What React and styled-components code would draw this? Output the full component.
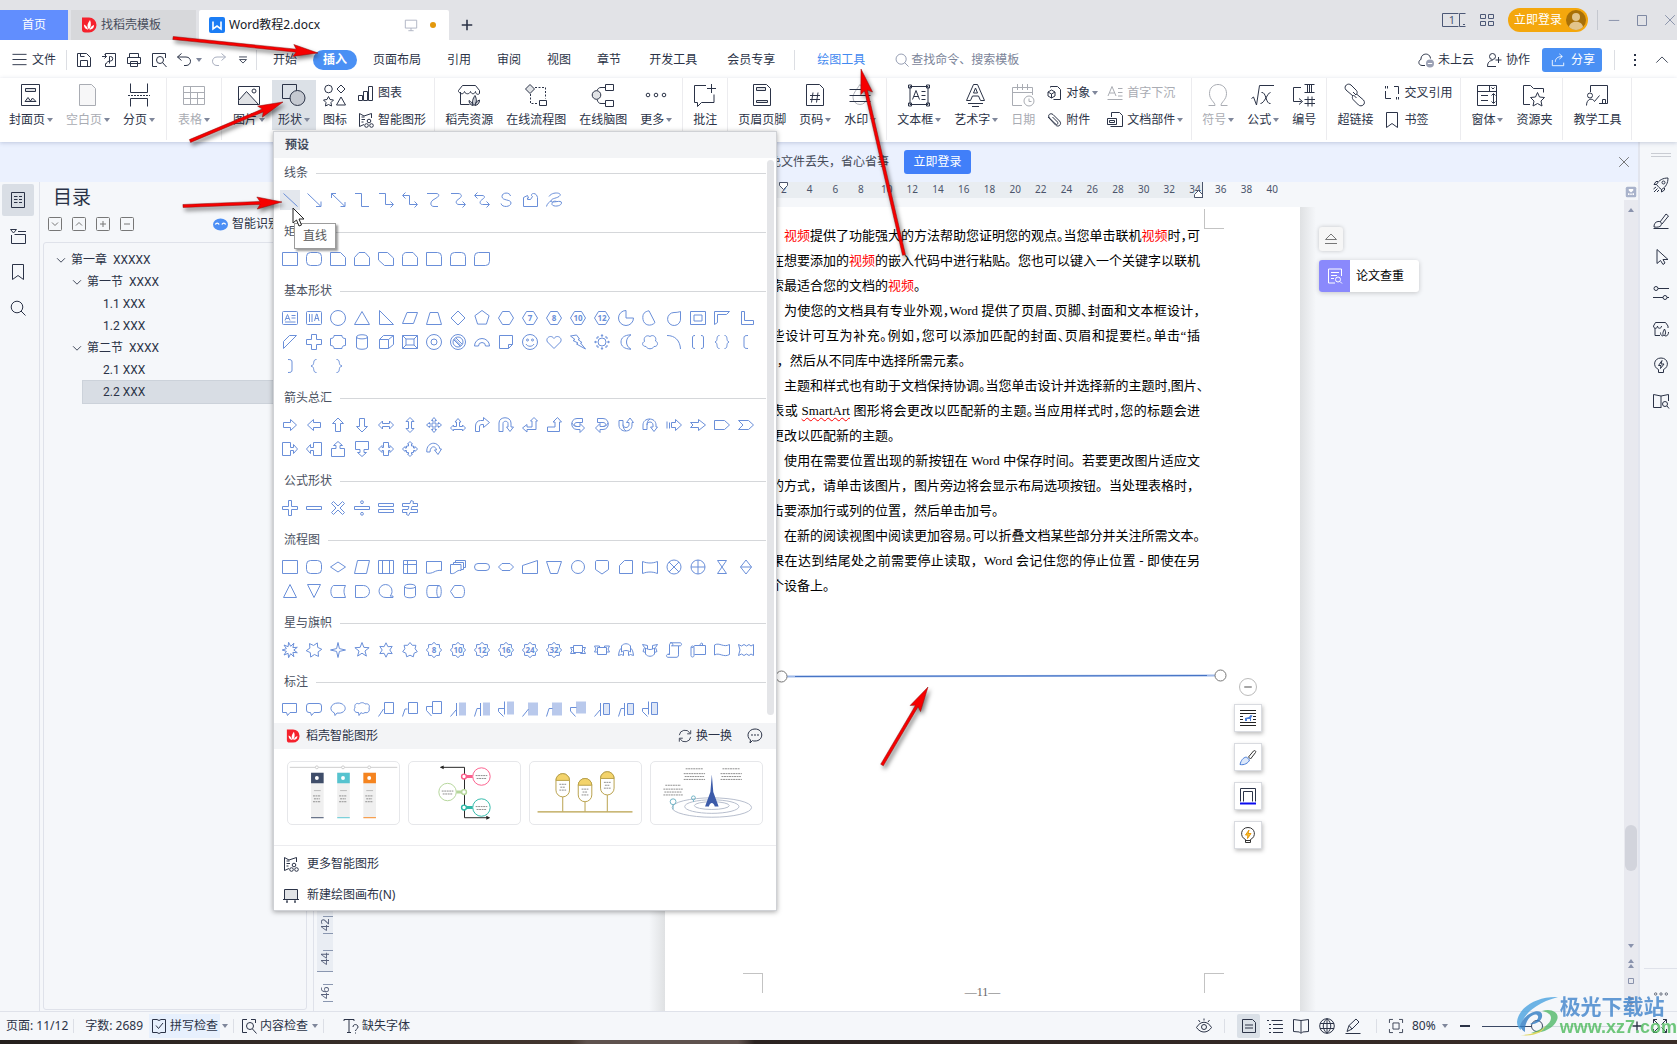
import React, { useState } from "react";
import styled, { createGlobalStyle } from "styled-components";

/* ---------- small geometry helpers ---------- */
const circ = (x, y, r) =>
  `M${x - r} ${y}a${r} ${r} 0 1 0 ${2 * r} 0a${r} ${r} 0 1 0 ${-2 * r} 0z`;
const ngon = (n, r = 7.5, rot = -90) =>
  "M" +
  Array.from({ length: n }, (_, i) => {
    const a = ((rot + (360 / n) * i) * Math.PI) / 180;
    return `${(8 + r * Math.cos(a)).toFixed(1)} ${(8 + r * Math.sin(a)).toFixed(1)}`;
  }).join("L") +
  "z";
const star = (n, R = 7.5, r = 3.5, rot = -90) =>
  "M" +
  Array.from({ length: n * 2 }, (_, i) => {
    const q = i % 2 ? r : R;
    const a = ((rot + (180 / n) * i) * Math.PI) / 180;
    return `${(8 + q * Math.cos(a)).toFixed(1)} ${(8 + q * Math.sin(a)).toFixed(1)}`;
  }).join("L") +
  "z";

const HEX = "M4.5 1.5h7l4 6.5-4 6.5h-7L.5 8z";
const RECT = "M.5 1.5h15v13h-15z";
const ROUND =
  "M4.5 1.5h7a4 4 0 014 4v5a4 4 0 01-4 4h-7a4 4 0 01-4-4v-5a4 4 0 014-4z";
const SEAL = star(8, 7.6, 6, -90);

const SECTIONS = [
  {
    name: "线条",
    items: [
      "M1.5 1.5l14 13",
      "M1.5 1.5l13 12.5M15 9.5v5h-5",
      "M1.5 1.5l13.5 13M15 10v4.5h-4.5M1.5 6V1.5H6",
      "M1 1.5h6.5v13H15",
      "M1 1.5h6.5v11H15M12.5 9.5l3 3-3 3",
      "M1 3.5h6.5v9H15M12.5 9.5l3 3-3 3M3.5.5l-3 3 3 3",
      "M1 1.5h9c4 0 3 3 1 4L7 8c-3 2-3 6.5 1 6.5h4",
      "M1 1.5h7c4 0 4 3 2 4.5L8 7.500c-3 2-2 5 1 5h6M12.5 9.5l3 3-3 3",
      "M1 3.5h7c3 0 3 2 1.5 3L7.5 8c-2 1.5-2 4.5 1 4.5H15M12.5 9.5l3 3-3 3M3.5.5l-3 3 3 3",
      "M12.5 4C12 0 4 0 4 4.5S13 7 13 11 4 16 3 11.5",
      "M1.5 5.5l4-2 1 2.500h-1v1.500h3l2-3c-2-1-1-3 1-3 2.500 0 3.500 2 4 4v9h-14z",
      "M3 4.5c3-5 13-4 11-1S5 6 5 9s11-2 10.5 2S5 15 6 11.500s4-2 5-2M5 9c-2 1-4 3-4.5 5.500",
    ],
  },
  {
    name: "矩形",
    items: [
      RECT,
      ROUND,
      "M.5 1.5h10l5 5v8h-15z",
      "M5 1.5h6l4.5 5v8h-15v-8z",
      "M.5 1.5h9l6 5.5v7.5h-9L.5 9z",
      "M5 1.5h6l4.5 5v8h-15v-9a4 4 0 014.5-4z",
      "M.5 1.5h11a4 4 0 014 4v9h-15z",
      "M4.5 1.5h7a4 4 0 014 4v9h-15v-9a4 4 0 014-4z",
      "M4.5 1.5h11v9a4 4 0 01-4 4h-11v-9a4 4 0 014-4z",
    ],
  },
  {
    name: "基本形状",
    items: [
      "M1.5 1.5h13a1 1 0 011 1v11a1 1 0 01-1 1h-13a1 1 0 01-1-1v-11a1 1 0 011-1zM3 10.5l2.5-6 2.5 6M4 8.5h3M9.5 5.5h4M9.5 8h4M3 12h10.5",
      "M1.5 1.5h13a1 1 0 011 1v11a1 1 0 01-1 1h-13a1 1 0 01-1-1v-11a1 1 0 011-1zM3.5 4v8M6 4v8M8.5 11l2-7h.5l2 7M9 8.5h3.5",
      circ(8, 8, 7.5),
      "M8 1.5l7.5 13H.5z",
      "M1.5.5v14h14z",
      "M5 2.5h10.5l-4 11H.5z",
      "M4 2.5h8l3.5 12H.5z",
      "M8 1l7 7-7 7-7-7z",
      ngon(5),
      HEX,
      { d: HEX, n: "7" },
      { d: HEX, n: "8" },
      { d: HEX, n: "10" },
      { d: HEX, n: "12" },
      "M8 .5v7.5h7.5A7.5 7.5 0 118 .5z",
      "M7 .8L13 12.5C9 17 2 15.5 1 9.5S3 1.5 7 .8z",
      "M8 2.5c3 0 5-.5 6.5-1V8A6.500 6.500 0 118 2.5z",
      "M.5 1.5h15v13h-15zM4 5h8v6H4z",
      "M.5 1.5h15l-3 3h-9v8l-3 2z",
      "M3.5 1.5h3v9h9v4h-12z",
      "M7.5 1.5h7l-13 13v-7z",
      "M5.5.5h5v5h5v5h-5v5h-5v-5h-5v-5h5z",
      "M4 1.5h8c0 2 1 3 3.5 3v7c-2.500 0-3.500 1-3.500 3H4c0-2-1-3-3.500-3v-7C3 4.500 4 3.500 4 1.500z",
      "M2.5 3c0-3 11-3 11 0v10c0 3-11 3-11 0zM2.5 3c0 2.500 11 2.500 11 0",
      "M1.5 5.5h9v9h-9zM1.5 5.5l4-4h10l-5 4M15.5 1.5v9l-5 4",
      "M.5 1.5h15v13h-15zM4 5h8v6H4zM.5 1.5L4 5M15.5 1.5L12 5M.5 14.5L4 11M15.5 14.5L12 11",
      circ(8, 8, 7.5) + circ(8, 8, 3),
      circ(8, 8, 7.5) + circ(8, 8, 5) + "M4 6l6 6M6 4l6 6M4.5 5l7 7",
      "M.5 12a7.5 7.5 0 0115 0h-4a3.5 3.5 0 00-7 0z",
      "M1.5 1.5h13v9l-4 4h-9zM14.5 10.5h-4v4",
      circ(8, 8, 7.5) + circ(5.5, 6, 1) + circ(10.5, 6, 1) + "M4 10c1.5 3 6.5 3 8 0",
      "M8 14.5L1.5 8C-1 4 5 0 8 4.5 11 0 17 4 14.500 8z",
      "M.5 2l6-1 3 4-1.5.5 4 3-1.5.5 5 6-9-5 1.500-1-5-2.500 2-1z",
      circ(8, 8, 4) +
        "M7 2l1-1.5L9 2zM7 14l1 1.5 1-1.5zM2 7L.5 8 2 9zM14 7l1.5 1L14 9zM3 5V3h2M11 3h2v2M13 11v2h-2M5 13H3v-2",
      "M13 .8C6 1 3 4 3 8s3 7 10 7.2C7 12 7 4 13 .8z",
      "M4 12.500c-4 0-4.500-4-1.500-5C1 3 5 .5 8 2.500c3-2.500 7 .5 5.500 4.500 3.500 1.500 2 6-1.500 5.500-1.500 3-6.500 3-8 0z",
      "M1 1.5c8 0 13 5 13.5 13.5",
      "M5 1.5c-2 0-2.5.5-2.5 2.5v8c0 2 .5 2.5 2.5 2.5M11 1.5c2 0 2.5.5 2.5 2.5v8c0 2-.5 2.5-2.5 2.5",
      "M5.5 1.5c-4 0-1 5.5-4.5 6.5 3.5 1 .5 6.5 4.5 6.5M10.5 1.5c4 0 1 5.5 4.5 6.5-3.5 1-.5 6.5-4.5 6.5",
      "M10 1.5c-3 0-4 .5-4 2.5v8c0 2 1 2.5 4 2.5",
      "M6 1.5c3 0 4 .5 4 2.5v8c0 2-1 2.5-4 2.5",
      "M10.5 1.5c-4.5 0-1 5.5-5.5 6.5 4.5 1 1 6.5 5.5 6.5",
      "M6.5 1.5c4.5 0 1 5.5 5.5 6.5-4.5 1-1 6.5-5.5 6.5",
    ],
  },
  {
    name: "箭头总汇",
    items: [
      "M1.5 5.5h7v-3l6 5.5-6 5.5v-3h-7z",
      "M14.5 5.5h-7v-3L1.5 8l6 5.5v-3h7z",
      "M5.5 14.5v-8h-3L8 1l5.5 5.5h-3v8z",
      "M5.5 1.5v8h-3L8 15l5.5-5.5h-3v-8z",
      "M.5 8l4-4v2.5h7V4l4 4-4 4V9.5h-7V12z",
      "M8 .5l4 4H9.5v7H12l-4 4-4-4h2.5v-7H4z",
      "M8 .5l2.5 3H9v3.5h3.5V5.5L15.5 8l-3 2.5V9H9v3.5h1.5L8 15.5l-2.5-3H7V9H3.5v1.5L.5 8l3-2.5V7H7V3.5H5.5z",
      "M8 1.5l3 3.5H9.5v4.5h3V8l3 3-3 3v-1.5h-9V14l-3-3 3-3v1.5h3V5H5z",
      "M1.5 14.5V9c0-3 2-5.5 5-5.5h3v-3l6 5-6 5v-3H8c-2 0-2.5 1-2.5 2.5v4.5z",
      "M1 14.5V6c0-7 12-7 12 0v4h2.5L12 14.5 8.5 10H10V6.5c0-3-5-3-5 0v8z",
      "M10 5V4H8.5L12 .5 15.5 4H14v8.5H5v2.5l-4.5-4L5 7.5V10h5z",
      "M9 10V5H7l4.5-4.5L15.5 5h-2v9.5h-12V10z",
      "M12.5 1.500H7c-7 0-7 11 0 11h3v3l4.500-4.500L10 6.500v3H7c-3.500 0-3.500-4 0-4h5.500zM2 6c1 2.500 3 3.500 5 3.500",
      "M3.5 1.500H9c7 0 7 11 0 11H6v3L1.500 11 6 6.500v3h3c3.500 0 3.500-4 0-4H3.500zM14 6c-1 2.500-3 3.500-5 3.500",
      "M1 3.5h4v4c0 4 6 4 6 0V5.500H8.500L12 1l3.500 4.500H14V8c0 8-13 8-13 0zM5 7.500c0 3 1 5 3 6.500",
      "M1 12.500V8C1 0 14 0 14 8v2h1.500L12 14.500 8.500 10H11V8c0-4-6-4-6 0v4.500zM5 8c0-3 1-5 3-6",
      "M1 4.5v7M3.5 5.5v6M5.5 5.5h4V2.5l6 5.5-6 5.5v-3h-4z",
      "M.5 5.5h8V2.5L15.5 8l-7 5.5v-3h-8L3 8z",
      "M.5 3.5h10l5 4.5-5 4.5H.5z",
      "M.5 3.5h10l5 4.5-5 4.5H.5L5 8z",
      "M.5 1.5h8v5h3V3.5l4 4.5-4 4.5v-3h-3v5h-8z",
      "M15.5 1.5h-8v5h-3V3.5L.5 8l4 4.5v-3h3v5h8z",
      "M1.5 15.5v-8h4.5v-3H3.5L8 .5l4.5 4H10v3h4.5v8z",
      "M1.5.5v8H6v3H3.5L8 15.5l4.5-4H10v-3h4.5v-8z",
      "M5.5 1.5h5v5h1.5V4.5L15.5 8 12 11.5V9.5h-1.5v5h-5v-5H4v2L.5 8 4 4.5v2h1.5z",
      "M8 .5L10.5 3H9.5v2h2v2H13V5.5L15.5 8 13 10.5V9.5h-1.5v2h-2V13h1L8 15.5 5.5 13h1v-1.5h-2v-2H3v1L.5 8 3 5.5V7h1.5V5h2V3h-1z",
      "M.8 11C0 1 12-1 14 8h1.5L12 13.5 8.5 9h2C9.5 4 4 5 4 11z",
    ],
  },
  {
    name: "公式形状",
    items: [
      "M6.5.5h3v6h6v3h-6v6h-3v-6h-6v-3h6z",
      "M.5 6.5h15v3H.5z",
      "M1.5 3.5l2-2L8 6l4.500-4.500 2 2L10 8l4.500 4.500-2 2L8 10l-4.500 4.500-2-2L6 8z",
      "M.5 6.5h15v3H.5z" + circ(8, 2.2, 1.4) + circ(8, 13.8, 1.4),
      "M.5 3.5h15v3H.5zM.5 9.5h15v3H.5z",
      "M.5 3.5H8L9 .5l2.5 1-.5 2h4.5v3H10l-1 3h6.5v3H8l-1.5 3-2-1 .5-2H.5v-3H6l1-3H.5z",
    ],
  },
  {
    name: "流程图",
    items: [
      RECT,
      ROUND,
      "M8 3l7.5 5L8 13 .5 8z",
      "M3.5 1.5h12l-3 13H.5z",
      "M.5 1.5h15v13h-15zM4.5 1.5v13M11.5 1.5v13",
      "M1.5 1.5h13v13h-13zM5.5 1.5v13M1.5 5.5h13",
      "M.5 2.5h15v9c-7-1-8 4-15 2.500z",
      "M5.5 1.5h10v7h-2M3.5 3.5h10v7h-2.5M.5 5.5h10.5v6c-5-1-5 4-10.5 3zM3.5 5V3.5M5.5 3.5v-2",
      "M4 4.5h8a3.5 3.5 0 010 7H4a3.5 3.5 0 010-7z",
      "M4 4.5h8L15.5 8 12 11.5H4L.5 8z",
      "M.5 6.5l15-5v13H.5z",
      "M.5 2.5h15l-4 12h-7z",
      circ(8, 8, 6.5),
      "M1.5 3c0-1 .5-1.5 1.5-1.5h10c1 0 1.5.5 1.5 1.5v7.5L8 15l-6.5-4.5z",
      "M6.5 1.5h8v13h-13v-8z",
      "M.5 2.5c5 2 10 2 15 0v12c-5-2-10-2-15 0z",
      circ(8, 8, 7) + "M3 3l10 10M13 3L3 13",
      circ(8, 8, 7) + "M8 1v14M1 8h14",
      "M3.5 1.5h9l-9 13h9z",
      "M8 1l5.5 7L8 15 2.5 8zM2.5 8h11",
      "M8 1.5l6.5 13h-13z",
      "M8 14.5l6.5-13h-13z",
      "M3.5 2.5h12c-2 4-2 7 0 12h-12c-3.500-2-3.500-10 0-12z",
      "M1.5 2.5h8a6 6 0 010 12h-8z",
      "M15 14.5H8A6.500 6.500 0 1114 8.500c0 2-1 3.500-2 4.500h3z",
      "M2.5 3.5c0-3 11-3 11 0v9c0 3-11 3-11 0zM2.5 3.5c0 2.500 11 2.500 11 0",
      "M3 2.5h10c3 0 3 12 0 12H3c-3 0-3-12 0-12zM13 2.5c-3 0-3 12 0 12",
      "M4.5 2.5h7c4 0 4 12 0 12h-7L.5 8.5z",
    ],
  },
  {
    name: "星与旗帜",
    items: [
      star(9, 7.8, 3.8, -100),
      star(6, 7.8, 4.5, -65),
      star(4, 7.5, 2, -90),
      star(5, 7.5, 3.2),
      star(6, 7.2, 3.8),
      star(7, 7.5, 5.2),
      { d: SEAL, n: "8" },
      { d: SEAL, n: "10" },
      { d: SEAL, n: "12" },
      { d: SEAL, n: "16" },
      { d: SEAL, n: "24" },
      { d: SEAL, n: "32" },
      "M3.5 3.5h9v7h-9zM3.5 5.5h-3l1.5 3-1.5 3h5v-1M12.5 5.5h3l-1.5 3 1.5 3h-5v-1",
      "M3.5 5.5h9v7h-9zM5.5 5.5v-1.5h-5l1.5 3-1.5 3h3M10.5 5.5v-1.5h5l-1.5 3 1.5 3h-3",
      "M3.5 4c2-3 7-3 9 0v6c-3-2-6-2-9 0zM3.5 6c-2 1-2.500 4-3 7.500l3-1 2 1V9.500M12.5 6c2 1 2.500 4 3 7.500l-3-1-2 1V9.500",
      "M3.5 6c3 2 6 2 9 0v6c-2 3-7 3-9 0zM5.5 7V3.500L.5 2.500l2 3-1.500 4 2.500 1M10.5 7V3.500l5-1-2 3 1.500 4-2.500 1",
      "M4 .8h10c2 0 2 3 0 3h-1.500v9c0 2-1 2.500-2.500 2.500H2c-2 0-2-3 0-3h1.500V3c0-1 .5-2.200 2-2.200s2 3 0 3h7M2 12.300h2",
      "M4.5 3.5h11v9h-11M1 5.5c0-2 3-2 3 0v8c0 2-3 2-3 0zM12.5 3.5v-2c-1-1-2.500 0-2.500 2M1 5c1 1 3 .5 3.500-1.500",
      "M.5 3c5-3 9 3 15-.5v10c-6 3.500-10-2.500-15 .5z",
      "M.5 2.500l3 1.500 2.500-1.500 2.500 1.500 2.500-1.500 2 1.500 2.500-1.500v11l-2.500-1.500-2 1.500-2.500-1.500-2.500 1.500-2.500-1.500-3 1.500L2 8z",
    ],
  },
  {
    name: "标注",
    items: [
      "M.5 2.5h14v9H8l-2.5 3-1-3h-4z",
      "M3 2.5h10a2.5 2.5 0 012.5 2.5v4a2.5 2.5 0 01-2.5 2.5H8l-2.5 3-1-3H3A2.5 2.5 0 01.5 9V5A2.5 2.5 0 013 2.5z",
      "M5 14.5l-.5-2.500C-2 9 1 2 8 2s10 7 4 9.500c-2 1-4 .5-5 .5z",
      "M5 14.5l-.5-3C0 12-.5 8 1 7 0 3 3 1.500 5 3c2-2 5-1.500 6 0 4-1 5 2 4 4 1 3-1 5.500-4 4.500-2 1.500-3 1-4 0z",
      "M6.5 1.5h9v11h-9zM5.5 8L.5 15.5",
      "M6.5 1.5h9v11h-9zM5.5 8H3L.5 15.5",
      "M6.5.5h9v12h-9zM6.5 5.5h-6v4l5 5.5",
      { d: "M6.5 2v13M6 9L.5 15.5", fill: "M9 1.5h7v13H9z" },
      { d: "M6.5 2v13M6 7.5H3L.5 15.5", fill: "M9 1.5h7v13H9z" },
      { d: "M6.5.5v13M6 7.5H.5v3l5 5", fill: "M9 .5h7v13H9z" },
      { d: "M6.5 8L.5 15.5", fill: "M6 1.5h10v13H6z" },
      { d: "M6.5 7.5H3L.5 15.5", fill: "M6 1.5h10v13H6z" },
      { d: "M6.5 6.5h-6v3.5l5 5.5", fill: "M6 .5h10v12H6z" },
      { d: "M6.5 2v13M6 9L.5 15.5M9.5 2.5h6v11h-6z", tint: "M9.5 2.5h6v11h-6z" },
      { d: "M6.5 2v13M6 7.5H3L.5 15.5M9.5 2.5h6v11h-6z", tint: "M9.5 2.5h6v11h-6z" },
      { d: "M6.5.5v13M6 7.5H.5v3l5 5M9.5 1.5h6v12h-6z", tint: "M9.5 1.5h6v12h-6z" },
    ],
  },
];

/* ---------- icons ---------- */
const GREY = "#e1e3e6";
const leaf = (
  <g fill="#fff" stroke="none">
    <path d="M8 12.5C5 9 7 6 9 3c1.5 3.5 1 7-1 9.5z" />
    <path d="M7 12.7C3.5 12 3 9.5 3 7.5c2.5 1 3.5 3 4 5.2z" />
    <path d="M8.5 12.7c1-2.5 2-3.7 4.500-4.700 0 2.500-1 4.200-4.500 4.700z" />
  </g>
);
const ICONS = {
  // 24 grid
  cover: (
    <>
      <path d="M2.5 1.5h18v21h-18z" />
      <path fill={GREY} d="M6.5 5.5h10v3h-10zM6 18.5l3-4 2.5 3.5 2-3 3.5 3.5z" />
    </>
  ),
  blank: <path fill="#f7f7f8" d="M3.5 1.5h12l4 4v17h-16z" />,
  pageBreak: (
    <>
      <path d="M3.5.5v9h17v-9M3.5 23.5v-8h17v8" />
      <path strokeDasharray="2 1" d="M1 12.5h22" />
    </>
  ),
  table: <path d="M1.5 3.5h21v18h-21zM1.5 9.5h21M1.5 15.5h21M8.5 3.5v18M15.5 9.5v12" />,
  picture: (
    <>
      <path d="M1.5 3.5h21v18h-21z" />
      <path fill={GREY} d="M1.5 17.5l8-9 12 13h-20z" />
      <path d={circ(17, 8, 2)} />
    </>
  ),
  shapes: (
    <>
      <path d="M.5 1.5h14v14h-14z" />
      <circle cx="15.5" cy="15" r="7.5" fill="#c5c9d1" />
    </>
  ),
  iconSet: (
    <path d={circ(5.5, 6, 3.8) + "M18 2l4 4-4 4-4-4zM5.5 13.5l1.5 3 3.5.5-2.5 2.5.5 3.5-3-1.5-3 1.5.5-3.5L.5 17l3.5-.5zM18 14l4.5 8h-9z"} />
  ),
  store: (
    <>
      <path d="M3.5 9v12.5h9M1.5 7.5l4-5h13l4 5v3c-2 2-4 0-4-2-1 3-4 3-5 0-1 3-5 3-6 0-1 3-4 3-6 0z" />
      <path fill="#c5c9d1" d="M17 22.5c-3-3-1-7 1-10 2 4 2 7-1 10zM16 22.5c-3-.5-4-3-4-5 2 1 4 3 4 5zM18 22.5c.5-3 2-4.5 4.5-5.5 0 3-1.5 5-4.5 5.5z" />
    </>
  ),
  flow: (
    <>
      <path fill={GREY} d="M6 1.5l4.500 4.500L6 10.500 1.500 6z" />
      <path strokeDasharray="2 1.5" d="M11 4.5h10.5v11M6.5 11v9.5h8" />
      <path d="M15.5 17.5h7v5h-7z" />
    </>
  ),
  mind: (
    <>
      <circle cx="5.5" cy="12" r="4.3" fill={GREY} />
      <path d="M14.5 1.5h8v6h-8zM14.5 17.5h8v6h-8zM6 7.5c1-2 2-3 4-3h4M6 16.5c1 3 2 4 4 4h4" />
    </>
  ),
  more: <path d={circ(4, 12, 1.8) + circ(12, 12, 1.8) + circ(20, 12, 1.8)} />,
  comment: <path d="M13 2.5H1.5v17h3v4l4-4h12.5v-8M18.5 1v9M14 5.5h9" />,
  headerFooter: (
    <>
      <path d="M3.5 1.5h13l4 4v17h-17z" />
      <path fill={GREY} d="M6.5 4.5h9v3h-9zM6.5 17.5h11v2h-11z" />
    </>
  ),
  pageNo: <path d="M3.5 1.5h13l4 4v17h-17zM10 9.5L8.5 19.5M15 9.5l-1.5 10M7 12.5h10M7 16.5h10" />,
  watermark: (
    <>
      <path stroke="#aeb1b8" d="M12 1.5c-4 6-7 9-7 13a7 7 0 0014 0c0-4-3-7-7-13z" />
      <path d="M1.5 6.5h21M1.5 12.5h21M1.5 18.5h21" />
    </>
  ),
  textBox: <path d="M3 3.5h18v18H3zM1.5 2h3v3h-3zM19.5 2h3v3h-3zM1.5 20h3v3h-3zM19.5 20h3v3h-3zM5.5 16.5L9 7.500l3.500 9M7 13.5h4.500M14.5 8.5h4M14.5 12.5h4M14.5 16.5h4" />,
  wordArt: <path d="M2.5 17.5L9.5 1.5h4l7 16h-4l-2-4.5h-6l-2 4.5zM9.5 10h4l-2-5zM4 20.5h15M8 23.5h7" />,
  date: <path d="M11 22.5H1.5v-18h20V12M1.5 9.5h20M6.5 1v6M11.5 1v6M16.5 1v6M18 13a5 5 0 100 10 5 5 0 000-10zM18 15.5v3h2.5" />,
  omega: <path d="M2.5 22.5H9C9 19 3.5 17 3.5 10.5c0-12 17-12 17 0C20.5 17 15 19 15 22.5h6.5" />,
  formula: <path d="M.5 15.5l2-1.5 3 8 3-19.5H23M10.5 9.5c5-1 4 12 9 11M19.5 9.5c-3 0-6 11-10 11" />,
  numbering: <path d="M9 4.5H1.5v14h8M7 15.5l3.5 3-3.5 3M12.5 1.5h10M12.5 9.5h10M15.5 1.5v8M17.5 1.5v8M19.5 1.5v8M16 13.5v10M20 13.5v10M12.5 16.5h10.5M12.5 20.5h10.5" />,
  link: <path d="M10 13L3 7C0 3 5-.5 8 2l5 5c2 2 1 4 0 5l-3-3M13.5 11l7 6c3 4-2 7.5-5 5l-5-5c-2-2-1-4 0-5l3 3" />,
  form: (
    <path d="M2.5 2.5h19v20h-19zM2.5 8.5h19M14.5 2.5v6M16.5 4.5l1.5 1.5 1.5-1.5M6 12.5h7M6 17.5h7M18.5 11v9M16.5 12.5l2-2 2 2M16.5 18.5l2 2 2-2" />
  ),
  folder: <path d="M8 21.5H1.5v-19h7l3 3h10v4M15.5 9.5l2 4.5 5 .5-3.5 3.5 1 5-4.5-2.5-4.5 2.5 1-5L8.5 14.5l5-.5z" />,
  teach: <path d={"M5.5 9V2.5h17v18H14" + circ(5, 12.5, 2.5) + "M1.5 22.5c0-7 6-8 8-4l5-6M17.5 20.5v-4h3v4"} />,
  // 16 grid
  chart: <path d="M.5 15.5v-5h4v5zM5.5 15.5v-9h4v9zM10.5 15.5v-14h4v14z" />,
  smart: (
    <path d={"M6 12.500l-4.500 2v-13L6 4l7.500-2.500V6M3.5 5h3M3.5 7.500h3.500M3.5 10h2" + circ(11, 9, 1.8) + circ(8.5, 13.5, 1.8) + circ(13.5, 13.5, 1.8)} />
  ),
  object: <path d="M4.5 2.5v-1h7l3 3v10h-7M5.5 5l3.5 2v4L5.5 13 2 11V7zM2 7l3.5 2L9 7M5.5 9v4" />,
  clip: <path d="M2 5l7.5 8c3 3 7-1 4-4L7 2.500C4.500.5 1 3 3.500 6l6 6c1.500 1.500 3-.5 2-2L6.500 5" />,
  dropCap: <path d="M1 11l4-9.5L9 11M2.5 8h5M11 3.5h4.5M11 7.5h4.5M.5 14.5h15M11 11h4.5" />,
  docPart: <path d="M4.5 5V.5h8l3 3v11h-12M.5 6.5h9v6h-9zM2.5 8.5h5v2h-5z" />,
  crossRef: <path d="M1.5 1v2.5M3.5 1v2.5M1.5 6v7.5H7M10 1.5h4.5V9M12.5 12v2.5M14.5 12v2.5" />,
  bookmark: <path d="M2.5.5h11v15L8 11.5l-5.5 4z" />,
  save: <path d="M1.5 1.5h9l4 4v9h-13zM4.5 14.5v-6h7v6M4.5 1.5v3h4" />,
  exportPdf: <path d="M4.5 1.5h10v13h-10v-3M4.5 1.5v3M1 4.5h4.5M3.5 2.5l2 2-2 2M8.5 11.5v-7h1a2.2 2.2 0 010 4.500c-2 0-4 1-4.500 3" />,
  print: <path d="M3.5 5.5v-4h9v4M1.5 5.5h13v6h-13zM4.5 9.5h7v5h-7z" />,
  preview: <path d={"M6 14.5H1.5v-13h13V6" + circ(9, 8, 3.5) + "M11.5 10.5l4 4.5"} />,
  undo: <path d="M5.5 1.5L1.5 5l4 3.500M1.5 5H10c6 0 6 8.500 0 8.500H8" />,
  redo: <path d="M10.5 1.5l4 3.5-4 3.5M14.5 5H6c-6 0-6 8.500 0 8.500h2" />,
  down: <path d="M3.5 4.5h9M4 7.500h8l-4 4z" />,
  burger: <path d="M.5 2.5h15M.5 8h15M.5 13.5h15" />,
  search: <path d={circ(7, 7, 5.8) + "M11 11l4.5 4.5"} />,
  cloud: (
    <>
      <path d="M7 13.5H4C-.5 13 .5 8 3 7.500 2.500 1 12 0 12.500 6.500" />
      <circle cx="12" cy="11.5" r="4" fill="#9aa0b4" stroke="none" />
      <path stroke="#fff" d="M9.8 11.5h4.4" />
    </>
  ),
  userAdd: <path d={circ(6.5, 4.5, 3) + "M10 14.5H1.5c0-4 2-6 5-6M12.5 5v6M9.5 8h6"} />,
  share: <path d="M1.5 8v6.5h13V11M5 10c0-4 3-6 7.5-6M9.5 1l3.5 3-3.5 3" />,
  outline: <path d="M1.5.5h13v15h-13zM4 4.5h3.5M4 7.5h3.5M4 10.5h3.5M9 4.5h3M9 7.5h3M9 10.5h3" />,
  section: <path d="M.5 1.5h6l-3 3.5zM8 3.5h8M1.5 7v8.5h14v-9h-11" />,
  rocket: <path d={"M6 10.5l-2.5-3C6 3 10 1 15 1c0 5-2 9-6.500 11.500zM3.5 7.5L1 7.500l2-3h2M8.5 12.500v2.500l3-2v-2M3 10l-2.5 2M4.5 11.500L1 15M6 13l-2 2" + circ(10.5, 5.5, 1.5)} />,
  brush: <path d="M.5 15.5h15M7 9l6-8 2.5 2L9 11M1 14c0-3 1-5 4-5.500s4 2 3 4c-1 1.500-4 2-7 1.500z" />,
  pointer: <path d="M4 .5v14l3.5-3 2.5 4 2-1.5-2-3.5h5z" />,
  sliders: <path d={circ(3, 3.5, 2) + "M5 3.5h11" + circ(12, 12.5, 2) + "M0 12.5h10M14 12.5h2"} />,
  storeSmall: <path d="M2 7v7.5h5M.5 5l2-3.5h10l2.5 3.5v2M.5 5c0 3 4 3 4 0 0 3 4 3 4 0M11 15c-2-2-1-4 .5-7 1.500 3 1.500 5-.5 7zM10 15c-2 0-2.500-2-2.500-3.500M12 15c3 0 3.500-2 3.500-4" />,
  bulb: <path d="M5.5 12.5C-.5 10 .5 1 8 1s8.5 9 2.500 11.500v3h-5zM9 3.500L5.500 8.500H8l-.5 3L11 7H8z" />,
  bookFind: <path d={"M8 14.5H.5v-13L8 3v12M8 3l7.5-1.5V8" + circ(12, 11, 2.5) + "M14 13l2 2.5"} />,
  checkBook: <path d="M6 1.5H1.5v13H6l2 1 2-1h4.5v-13H10l-2 1zM5 7.5l2.5 3L12 5" />,
  findBook: <path d={"M6 1.5H1.5v13H6M10 1.5h4.5V5" + circ(9, 8, 3.5) + "M11.5 11l4 4.5"} />,
  fontMissing: <path d="M1 3V1.5h10V3M6 1.5v13M4 14.5h4M10 9c0-3.500 5-3 5 0 0 2-2.500 2-2.500 4M12.5 14.5v1" />,
  eye: <path d={"M.5 9.5c4-7 11-7 15 0-4 6-11 6-15 0zM8 .5v2M2.5 2l1.5 2M13.5 2L12 4" + circ(8, 9, 2.5)} />,
  pageView: <path d="M1.5 1.5h10l3 3v10h-13zM4 7h8M4 10h8" />,
  list: <path d="M0 2.5h2M4.5 2.5h11M2 6.5h2M6 6.5h10M2 10.5h2M6 10.5h10M2 14.5h2M6 14.5h10" />,
  book: <path d="M8 15V2.500L.5 1.500v12l6 .5L8 15.500l1.500-1.500 6-.5v-12L8 2.500" />,
  globe: <path d={circ(8, 8, 7.3) + "M8 .7C3 5 3 11 8 15.300 13 11 13 5 8 .7M1 5.5h14M1 10.5h14M8 .7v14.5"} />,
  pen: <path d="M.5 15.5h15M2 13.5l2-6L11 1l3 3-7 7zM4 7.500l3 3.500" />,
  fit: <path d="M.5 4.500v-4h4M11.5.5h4v4M15.5 11.5v4h-4M4.5 15.5h-4v-4M4.5 4.5h7v7h-7z" />,
  full: <path d="M1.5 5V1.5H5M1.5 1.5l5 5M11 1.5h3.5V5M14.5 1.5l-5 5M14.5 11v3.5H11M14.5 14.5l-5-5M5 14.5H1.5V11M1.5 14.5l5-5" />,
  refresh: <path d="M1.5 7a6.5 6.5 0 0112-2.500M14.5 1.5v4h-4M14.5 9a6.5 6.5 0 01-12 2.500M1.5 14.5v-4h4" />,
  bubble: <path d={"M3 15l.5-3C-1.5 8 1.5 1 8 1c9 0 9 12 0 12-1.500 0-2 0-2.500-.5z" + circ(5, 7, 0.4) + circ(8, 7, 0.4) + circ(11, 7, 0.4)} />,
  canvas: (
    <>
      <path fill={GREY} d="M1.5 2.5h13v10h-13z" />
      <path d="M0 12.5h16M4 15.5v-3M12 15.5v-3M3 15h2M11 15h2" />
    </>
  ),
  eject: <path stroke="#777" d="M8 3L2.5 8.500h11zM2 12.5h12" />,
  paper: <path d={"M8 15H1.5V1h13v7M4 4.5h8M4 7.5h6M4 10.5h3" + circ(11, 11.5, 2.5) + "M13 13.5l2 2"} />,
  monitor: <path d="M1.5 2.5h13v9h-13zM8 11.5v3M5 14.5h6" />,
  plus: <path strokeWidth="1.8" d="M8 2v12M2 8h12" />,
  minus: <path strokeWidth="2" d="M3 8h10" />,
  close: <path d="M2.5 2.5l11 11M13.5 2.5l-11 11" />,
  square: <path d="M3.5 3.5h9v10h-9z" />,
  dash: <path d="M2 8.5h12" />,
  grid: <path d="M1.5 2.5h5v4h-5zM9.5 2.5h5v4h-5zM1.5 9.5h5v4h-5zM9.5 9.5h5v4h-5z" />,
  dots: <path strokeWidth="2" d="M8 2v2M8 7v2M8 12v2" />,
  up: <path d="M1.5 11L8 4.500l6.500 6.500" />,
  chev: <path d="M3.5 6L8 10.500 12.500 6" />,
  boxDown: <path d="M2.5 1.5h11a1 1 0 011 1v11a1 1 0 01-1 1h-11a1 1 0 01-1-1v-11a1 1 0 011-1zM5 6.5l3 3 3-3" />,
  boxUp: <path d="M2.5 1.5h11a1 1 0 011 1v11a1 1 0 01-1 1h-11a1 1 0 01-1-1v-11a1 1 0 011-1zM5 9.5l3-3 3 3" />,
  boxPlus: <path d="M2.5 1.5h11a1 1 0 011 1v11a1 1 0 01-1 1h-11a1 1 0 01-1-1v-11a1 1 0 011-1zM5 8h6M8 5v6" />,
  boxMinus: <path d="M2.5 1.5h11a1 1 0 011 1v11a1 1 0 01-1 1h-11a1 1 0 01-1-1v-11a1 1 0 011-1zM5 8h6" />,
  face: (
    <>
      <ellipse cx="8" cy="8" rx="8" ry="6.5" fill="#4c8ff5" stroke="none" />
      <path stroke="#fff" strokeWidth="1.5" d="M2.5 8c1-2 3-2 4 0M9.5 8c1-2 3-2 4 0" />
    </>
  ),
  docer: (
    <>
      <path fill="#f5222d" stroke="none" d="M1 .5h7a7.5 7.5 0 010 15H4a3 3 0 01-3-3z" />
      {leaf}
    </>
  ),
  wps: (
    <>
      <rect width="16" height="16" rx="2" fill="#1b7df5" stroke="none" />
      <path stroke="#fff" strokeWidth="1.6" d="M4 4.500v7.500l4-3 4 3V4.500" />
    </>
  ),
  wrap: (
    <>
      <path stroke="#222" d="M0 .5h16M0 3.5h16M0 6.5h3M0 9.5h3M13 6.5h3M13 9.5h3M0 12.5h16M0 15.5h16" />
      <path fill="#4c7fd8" stroke="none" d="M5 11V8l4-1 1.5-2 2 .5L11 8v3h-1V9H7v2z" />
    </>
  ),
  paint: (
    <>
      <path d="M8.5 8l5-6c1-1 3 0 2 1.500l-5 6.500z" stroke="#333" />
      <path d="M0 15.5c1-4 3-7 6.5-7.5l3 3C8.500 14 4 16.500 0 15.500z" stroke="#4c7fd8" fill="#dce8fb" />
    </>
  ),
  border: (
    <>
      <path d="M.5 13.5V.5h15v13M3.5 13.5V3.500h9v10" />
      <path stroke="#0b0bf0" strokeWidth="2" d="M0 15.5h16" />
    </>
  ),
  idea: (
    <>
      <path stroke="#333" d="M5.5 12.5C-.5 10 .5.5 8 .5s8.5 9.500 2.500 12v3h-5zM5.5 13.5h5" />
      <path fill="#ffc62b" stroke="#e59a12" d="M9 3L5.500 8H8l-.5 3.500L11 6.500H8z" />
    </>
  ),
  rulerToggle: (
    <>
      <rect x="1" y="1" width="14" height="14" rx="2" fill="#a9b3cb" stroke="none" />
      <path fill="#fff" stroke="none" d="M5 4h6v2L8 8.500 5 6zM4 12V9.500h2V12zM7 12v-2h2v2zM10 12V9.500h2V12z" />
    </>
  ),
};

const Svg = styled.svg`
  display: block;
  flex: none;
  fill: none;
  stroke: currentColor;
  overflow: visible;
`;
const Icon = ({ name, size = 16, grid = 16 }) => (
  <Svg width={size} height={size} viewBox={`0 0 ${grid} ${grid}`} aria-hidden="true">
    {ICONS[name]}
  </Svg>
);
const Caret = () => (
  <Svg width="6" height="4" viewBox="0 0 6 4" aria-hidden="true">
    <path fill="#7f879b" stroke="none" d="M0 0h6L3 4z" />
  </Svg>
);

/* ---------- ribbon data ---------- */
const MENU = ["开始", "插入", "页面布局", "引用", "审阅", "视图", "章节"];
const MENU_WIDE = ["开发工具", "会员专享"];

const RIBBON_START = [
  { label: "封面页", icon: "cover", caret: true },
  { label: "空白页", icon: "blank", caret: true, muted: true },
  { label: "分页", icon: "pageBreak", caret: true },
  "|",
  { label: "表格", icon: "table", caret: true, muted: true },
  "|",
  { label: "图片", icon: "picture", caret: true },
  { label: "形状", icon: "shapes", caret: true, menu: true },
  { label: "图标", icon: "iconSet" },
  [
    { label: "图表", icon: "chart" },
    { label: "智能图形", icon: "smart" },
  ],
];
const RIBBON_REST = [
  "|",
  { label: "稻壳资源", icon: "store" },
  { label: "在线流程图", icon: "flow" },
  { label: "在线脑图", icon: "mind" },
  { label: "更多", icon: "more", caret: true },
  "|",
  { label: "批注", icon: "comment" },
  "|",
  { label: "页眉页脚", icon: "headerFooter" },
  { label: "页码", icon: "pageNo", caret: true },
  { label: "水印", icon: "watermark", caret: true },
  "|",
  { label: "文本框", icon: "textBox", caret: true },
  { label: "艺术字", icon: "wordArt", caret: true },
  { label: "日期", icon: "date", muted: true },
  [
    { label: "对象", icon: "object", caret: true },
    { label: "附件", icon: "clip" },
  ],
  [
    { label: "首字下沉", icon: "dropCap", muted: true },
    { label: "文档部件", icon: "docPart", caret: true },
  ],
  "|",
  { label: "符号", icon: "omega", caret: true, muted: true },
  { label: "公式", icon: "formula", caret: true },
  { label: "编号", icon: "numbering" },
  "|",
  { label: "超链接", icon: "link" },
  [
    { label: "交叉引用", icon: "crossRef" },
    { label: "书签", icon: "bookmark" },
  ],
  "|",
  { label: "窗体", icon: "form", caret: true },
  { label: "资源夹", icon: "folder" },
  "|",
  { label: "教学工具", icon: "teach" },
  "|",
];

const OUTLINE = [
  { level: 0, text: "第一章  XXXXX", open: true },
  { level: 1, text: "第一节  XXXX", open: true },
  { level: 2, text: "1.1 XXX" },
  { level: 2, text: "1.2 XXX" },
  { level: 1, text: "第二节  XXXX", open: true },
  { level: 2, text: "2.1 XXX" },
  { level: 2, text: "2.2 XXX", active: true },
];

/* ---------- shapes menu ---------- */
const ShapeIcon = ({ shape }) => {
  const s = typeof shape === "string" ? { d: shape } : shape;
  return (
    <Svg width="16" height="16" viewBox="0 0 16 16" aria-hidden="true">
      {s.fill && <path d={s.fill} fill="#b9c9ec" stroke="none" />}
      {s.tint && <path d={s.tint} fill="#dde6f7" stroke="none" />}
      <path d={s.d} />
      {s.n && (
        <text x="8" y="11" textAnchor="middle" fontSize="8" fontWeight="700" fill="currentColor" stroke="none">
          {s.n}
        </text>
      )}
    </Svg>
  );
};

const textLines = (x, y, n, w = 8) =>
  Array.from({ length: n }, (_, i) => (
    <path key={i} stroke="#8d8d8d" strokeDasharray="2 .6" d={`M${x - w / 2 + (i % 2)} ${y + i * 3}h${w - (i % 2) * 2}`} />
  ));

const THUMBS = [
  <g key="a">
    <path stroke="#ccc" d="M1 5.5h111" />
    {[["#3f4d69", 29], ["#56c3cf", 56], ["#f5841f", 83]].map(([c, x]) => (
      <g key={c}>
        <path fill="#f0f0f0" stroke="none" d={`M${x - 6} 11h13v46h-13z`} />
        <path fill={c} stroke="none" d={`M${x - 6} 11h13v11h-13z`} />
        <path stroke={c} d={`M${x - 6} 57.5h13`} />
        <circle cx={x} cy="5.5" r="1.5" fill="#fff" stroke="#ccc" />
        <circle cx={x} cy="16.5" r="2" fill="#fff" stroke="none" />
        <path stroke="#bbb" d={`M${x - 3} 29.5h7`} />
        {textLines(x, 35, 3)}
      </g>
    ))}
  </g>,
  <g key="b">
    <path stroke="#222" d="M32 5.5h24.5v52H82" />
    <path fill="#222" stroke="none" d="M31 5.5l4-2v4zM83 57.5l-4-2v4z" />
    {[["#fb5f8c", 56, 15, 74], ["#b5d69b", 56, 31, 39], ["#2fb9a8", 56, 47, 74]].map(([c, x, y, cx]) => (
      <g key={c} stroke={c}>
        <path strokeWidth="3" d={`M${x} ${y}L${cx > x ? cx - 9 : cx + 9} ${y}`} />
        <circle cx={x} cy={y} r="2.5" fill="#fff" strokeWidth="1.5" />
        <circle cx={cx} cy={y} r="9" fill="#fff" />
        {textLines(cx, y - 1, 2, 12)}
      </g>
    ))}
  </g>,
  <g key="c" stroke="#b8a04a">
    <path strokeWidth="1.5" d="M7 51.5h98" />
    {[[33, 12], [56, 17], [79, 10]].map(([x, y]) => (
      <g key={x}>
        <path d={`M${x} ${y + 24}V51`} />
        <rect x={x - 7} y={y} width="14" height="24" rx="7" fill="#fff" />
        <path fill="#f3d36b" d={`M${x - 7} ${y + 7}a7 7 0 0114 0z`} />
        <g>{textLines(x, y + 11, 3, 7)}</g>
      </g>
    ))}
  </g>,
  <g key="d">
    <g stroke="#b5bccb">
      <ellipse cx="62" cy="47" rx="41" ry="10" />
      <ellipse cx="62" cy="46" rx="28" ry="7" />
      <ellipse cx="62" cy="45" rx="18" ry="4" />
    </g>
    <path fill="#3c5ba9" stroke="none" d="M62 13l1.5 18 5.5 15h-4c-1-5-5-5-6 0h-4l5.500-15z" />
    <circle cx="22" cy="41" r="3" stroke="#6fb3c4" />
    <path stroke="#6fb3c4" d="M22 44v5M43 39v2" />
    <circle cx="43" cy="37" r="2" stroke="#6fb3c4" />
    {textLines(44, 7, 1, 18)}
    {textLines(82, 7, 1, 18)}
    {textLines(44, 12, 3, 22)}
    {textLines(82, 12, 3, 22)}
    {textLines(22, 24, 1, 16)}
    {textLines(22, 28, 3, 20)}
  </g>,
];

const ShapeMenu = () => {
  const [picked, setPicked] = useState("线条-0");
  return (
    <Menu>
      <MenuTitle>预设</MenuTitle>
      <ShapeScroll>
        {SECTIONS.map((sec) => (
          <section key={sec.name}>
            <SectionTitle>{sec.name}</SectionTitle>
            <ShapeGrid>
              {sec.items.map((shape, i) => {
                const key = `${sec.name}-${i}`;
                return (
                  <ShapeButton
                    key={key}
                    aria-label={`${sec.name} ${i + 1}`}
                    $active={picked === key}
                    onClick={() => setPicked(key)}
                  >
                    <ShapeIcon shape={shape} />
                  </ShapeButton>
                );
              })}
            </ShapeGrid>
          </section>
        ))}
        <MenuScrollbar />
        <Cursor width="13" height="20" viewBox="0 0 13 20" aria-hidden="true">
          <path fill="#fff" stroke="#222" d="M1 1v15l3.500-3 2.500 6 2.500-1-2.500-6H12z" />
        </Cursor>
        <Tip role="tooltip">直线</Tip>
      </ShapeScroll>
      <SmartHead>
        <Icon name="docer" size={14} />
        <span>稻壳智能图形</span>
        <PlainButton>
          <Icon name="refresh" size={14} />
          换一换
        </PlainButton>
        <PlainButton aria-label="反馈">
          <Icon name="bubble" />
        </PlainButton>
      </SmartHead>
      <Thumbs>
        {THUMBS.map((t, i) => (
          <Thumb key={i} aria-label={`智能图形 ${i + 1}`}>
            <Svg width="111" height="62" viewBox="0 0 113 64">
              {t}
            </Svg>
          </Thumb>
        ))}
      </Thumbs>
      <MenuFoot>
        <FootButton>
          <Icon name="smart" />
          更多智能图形
        </FootButton>
        <FootButton>
          <Icon name="canvas" />
          新建绘图画布(N)
        </FootButton>
      </MenuFoot>
    </Menu>
  );
};

const Small = ({ item }) => (
  <SmallTool $muted={item.muted}>
    <Icon name={item.icon} />
    <Label>
      {item.label}
      {item.caret && <Caret />}
    </Label>
  </SmallTool>
);

const Big = ({ item }) => (
  <Tool $muted={item.muted} $open={item.menu}>
    <Icon name={item.icon} size={24} grid={24} />
    <Label>
      {item.label}
      {item.caret && <Caret />}
    </Label>
  </Tool>
);

const RibbonItem = ({ item }) => {
  if (item === "|") return <RibbonSep />;
  if (Array.isArray(item))
    return (
      <SmallColumn>
        {item.map((it) => (
          <Small key={it.label} item={it} />
        ))}
      </SmallColumn>
    );
  if (item.menu)
    return (
      <MenuAnchor>
        <Big item={item} />
        <ShapeMenu />
      </MenuAnchor>
    );
  return <Big item={item} />;
};

const Ribbon = () => (
  <RibbonBar>
    <RibbonGroup>
      {RIBBON_START.map((item, i) => (
        <RibbonItem key={i} item={item} />
      ))}
    </RibbonGroup>
    <RibbonGroup $snug>
      {RIBBON_REST.map((item, i) => (
        <RibbonItem key={i} item={item} />
      ))}
    </RibbonGroup>
  </RibbonBar>
);

/* ---------- document ---------- */
const V = () => <Hot>视频</Hot>;
const DocText = () => (
  <DocBody>
    <p>
      <Line $indent $tight>
        <V />
        提供了功能强大的方法帮助您证明您的观点。当您单击联机
        <V />
        时，可
      </Line>
      <Line>
        以在想要添加的
        <V />
        的嵌入代码中进行粘贴。您也可以键入一个关键字以联机
      </Line>
      <Line $last>
        搜索最适合您的文档的
        <V />。
      </Line>
    </p>
    <p>
      <Line $indent $tight>为使您的文档具有专业外观，Word 提供了页眉、页脚、封面和文本框设计，</Line>
      <Line $tight>这些设计可互为补充。例如，您可以添加匹配的封面、页眉和提要栏。单击“插</Line>
      <Line $last>入”，然后从不同库中选择所需元素。</Line>
    </p>
    <p>
      <Line $indent $tight>主题和样式也有助于文档保持协调。当您单击设计并选择新的主题时,图片、</Line>
      <Line $tight>
        图表或 <Typo>SmartArt</Typo> 图形将会更改以匹配新的主题。当应用样式时，您的标题会进
      </Line>
      <Line $last>行更改以匹配新的主题。</Line>
    </p>
    <p>
      <Line $indent>使用在需要位置出现的新按钮在 Word 中保存时间。若要更改图片适应文</Line>
      <Line>档的方式，请单击该图片，图片旁边将会显示布局选项按钮。当处理表格时，</Line>
      <Line $last>单击要添加行或列的位置，然后单击加号。</Line>
    </p>
    <p>
      <Line $indent $tight>在新的阅读视图中阅读更加容易。可以折叠文档某些部分并关注所需文本。</Line>
      <Line>如果在达到结尾处之前需要停止读取，Word 会记住您的停止位置 - 即使在另</Line>
      <Line $last>一个设备上。</Line>
    </p>
  </DocBody>
);

/* ---------- red arrows ---------- */
const ARROWS = [
  [173, 38, 318, 53],
  [190, 141, 283, 102],
  [183, 206, 282, 202],
  [904, 255, 861, 69],
  [882, 765, 928, 687],
];
const arrowPath = ([x1, y1, x2, y2]) => {
  const len = Math.hypot(x2 - x1, y2 - y1);
  const ux = (x2 - x1) / len;
  const uy = (y2 - y1) / len;
  const at = (back, side) =>
    `${(x2 - ux * back - uy * side).toFixed(1)} ${(y2 - uy * back + ux * side).toFixed(1)}`;
  return `M${at(len, 1.5)}L${at(22, 1.5)}L${at(25, 6)}L${at(0, 0)}L${at(25, -6)}L${at(22, -1.5)}L${at(len, -1.5)}z`;
};

const App = () => {
  const [zoom, setZoom] = useState(38);
  return (
    <Shell>
      <GlobalStyle />
      <TitleBar>
        <HomeTab>首页</HomeTab>
        <TemplateTab>
          <Icon name="docer" />
          找稻壳模板
        </TemplateTab>
        <FileTab>
          <Icon name="wps" />
          <span>Word教程2.docx</span>
          <Faint>
            <Icon name="monitor" size={14} />
          </Faint>
          <Dot />
        </FileTab>
        <AddTab aria-label="新建标签">
          <Icon name="plus" size={14} />
        </AddTab>
        <WindowTools>
          <PlainButton aria-label="单页">
            <Svg width="24" height="16" viewBox="0 0 24 16">
              <path d="M16.5 1.5H.5v13h16M23.500 1.500h-6v13h6M21 12.500h2" />
              <text x="10" y="12" fontSize="11" textAnchor="middle" fill="currentColor" stroke="none">1</text>
            </Svg>
          </PlainButton>
          <PlainButton aria-label="宫格">
            <Icon name="grid" />
          </PlainButton>
          <LoginPill>
            立即登录
            <Svg width="20" height="20" viewBox="0 0 20 20">
              <circle cx="10" cy="10" r="10" fill="#a87008" stroke="none" />
              <circle cx="10" cy="7" r="4" fill="#e2c48c" stroke="none" />
              <path d="M3 17c1-7 13-7 14 0-4 4-10 4-14 0z" fill="#e2c48c" stroke="none" />
            </Svg>
          </LoginPill>
          <WinSep />
          <WinButton aria-label="最小化"><Icon name="dash" size={14} /></WinButton>
          <WinButton aria-label="最大化"><Icon name="square" /></WinButton>
          <WinButton aria-label="关闭"><Icon name="close" size={14} /></WinButton>
        </WindowTools>
      </TitleBar>

      <MenuBar>
        <FileButton>
          <Icon name="burger" size={15} />
          文件
        </FileButton>
        <BarSep />
        <QuickTools>
          {["save", "exportPdf", "print", "preview", "undo"].map((n) => (
            <PlainButton key={n} aria-label={n}>
              <Icon name={n} />
            </PlainButton>
          ))}
          <QuickCaret><Caret /></QuickCaret>
          <Faint><Icon name="redo" /></Faint>
          <PlainButton aria-label="自定义"><Icon name="down" size={14} /></PlainButton>
        </QuickTools>
        <BarSep />
        <Tabs>
          {MENU.map((m) => (
            <MenuTab key={m} $active={m === "插入"}>{m}</MenuTab>
          ))}
          {MENU_WIDE.map((m) => (
            <MenuTab key={m} $wide>{m}</MenuTab>
          ))}
        </Tabs>
        <BarSep />
        <ToolTab>绘图工具</ToolTab>
        <SearchBox>
          <Icon name="search" size={14} />
          <input aria-label="查找命令" placeholder="查找命令、搜索模板" />
        </SearchBox>
        <MenuRight>
          <PlainButton><Icon name="cloud" />未上云</PlainButton>
          <PlainButton><Icon name="userAdd" />协作</PlainButton>
          <ShareButton><Icon name="share" size={14} />分享</ShareButton>
          <BarSep />
          <PlainButton aria-label="更多"><Icon name="dots" /></PlainButton>
          <PlainButton aria-label="收起"><Icon name="up" size={14} /></PlainButton>
        </MenuRight>
      </MenuBar>
      <Ribbon />

      <Work>
        <MainColumn>
          <Banner>
            <span>避免文件丢失，省心省事</span>
            <BannerButton>立即登录</BannerButton>
            <BannerClose aria-label="关闭提示"><Icon name="close" size={14} /></BannerClose>
          </Banner>
          <Panes>
            <NavRail>
              {["outline", "section", "bookmark", "search"].map((n, i) => (
                <RailButton key={n} $active={i === 0} aria-label={n}>
                  <Icon name={n} />
                </RailButton>
              ))}
            </NavRail>
            <OutlinePane>
              <h2>目录</h2>
              <OutlineTools>
                {["boxDown", "boxUp", "boxPlus", "boxMinus"].map((n) => (
                  <PlainButton key={n} aria-label={n}><Icon name={n} /></PlainButton>
                ))}
                <SmartButton><Icon name="face" size={15} />智能识别</SmartButton>
              </OutlineTools>
              <Tree>
                {OUTLINE.map((o) => (
                  <TreeRow key={o.text} $level={o.level} $active={o.active}>
                    {o.open && <Icon name="chev" size={14} />}
                    <span>{o.text}</span>
                  </TreeRow>
                ))}
              </Tree>
            </OutlinePane>
            <SideRuler>
              <RulerFill>
                <SideMark $both>42</SideMark>
                <SideMark>44</SideMark>
              </RulerFill>
              <RulerTail>
                <SideMark $both>46</SideMark>
              </RulerTail>
            </SideRuler>
            <DocArea>
              <RulerRow>
                <Ruler>
                  {Array.from({ length: 20 }, (_, i) => (
                    <span key={i}>{(i + 1) * 2}</span>
                  ))}
                  <IndentMarks width="640" height="18" viewBox="0 0 640 18" aria-hidden="true">
                    <path fill="#fff" d="M114.5.5h8v3l-4 4-4-4zM529.5 15.5v-3l4-4 4 4v3z" />
                    <path d="M537.5 0v16" />
                  </IndentMarks>
                </Ruler>
              </RulerRow>
              <Canvas>
                <Page>
                  <DocText />
                  <Corner $top $right />
                  <Corner />
                  <Corner $right />
                  <PageNumber>—11—</PageNumber>
                  <DrawnLine viewBox="0 0 452 14" width="452" height="14" aria-hidden="true">
                    <path stroke="#9db8e8" strokeWidth="2" d="M12 7.5L440 6.5" />
                    <path stroke="#4472c4" d="M20 7.5L432 6.5" />
                    <circle cx="6.5" cy="7.5" r="5.5" fill="#fff" stroke="#777" />
                    <circle cx="445.5" cy="6.5" r="5.5" fill="#fff" stroke="#777" />
                  </DrawnLine>
                  <FloatTools>
                    <RoundButton aria-label="收起工具"><Icon name="minus" size={12} /></RoundButton>
                    {["wrap", "paint", "border", "idea"].map((n) => (
                      <FloatButton key={n} aria-label={n}><Icon name={n} /></FloatButton>
                    ))}
                  </FloatTools>
                  <SideCards>
                    <EjectButton aria-label="收起卡片"><Icon name="eject" /></EjectButton>
                    <CheckCard>
                      <i><Icon name="paper" /></i>
                      论文查重
                    </CheckCard>
                  </SideCards>
                </Page>
              </Canvas>
            </DocArea>
            <ScrollColumn>
              <RulerToggle><Icon name="rulerToggle" size={12} /></RulerToggle>
              <ScrollTrack>
                <Svg width="6" height="4" viewBox="0 0 6 4"><path fill="#8a93ad" stroke="none" d="M0 4h6L3 0z" /></Svg>
                <Thumbbar />
                <Svg width="10" height="70" viewBox="0 0 10 70">
                  <path fill="#8a93ad" stroke="none" d="M2 3h6L5 7zM2 22h6L5 18zM2 27h6L5 23zM2 61h6L5 65zM2 56h6L5 60z" />
                  <path stroke="#8a93ad" d="M2.5 37.5h5v5h-5z" />
                </Svg>
              </ScrollTrack>
            </ScrollColumn>
          </Panes>
        </MainColumn>
        <RightRail>
          <Grip />
          {["rocket", "brush", "pointer", "sliders", "storeSmall", "bulb", "bookFind"].map((n) => (
            <PlainButton key={n} aria-label={n}><Icon name={n} /></PlainButton>
          ))}
          <RailFoot>
            <PlainButton aria-label="更多面板"><Icon name="more" grid={24} /></PlainButton>
          </RailFoot>
        </RightRail>
      </Work>

      <StatusBar>
        <StatusText>页面: 11/12</StatusText>
        <StatusSep />
        <StatusText>字数: 2689</StatusText>
        <StatusButton $active><Icon name="checkBook" />拼写检查</StatusButton>
        <Caret />
        <StatusSep />
        <StatusButton><Icon name="findBook" />内容检查</StatusButton>
        <Caret />
        <StatusSep />
        <StatusButton $apart><Icon name="fontMissing" />缺失字体</StatusButton>
        <StatusRight>
          <PlainButton aria-label="护眼"><Icon name="eye" /></PlainButton>
          <StatusSep />
          <ViewButtons>
            {["pageView", "list", "book", "globe", "pen"].map((n, i) => (
              <ViewButton key={n} $active={i === 0} aria-label={n}><Icon name={n} /></ViewButton>
            ))}
          </ViewButtons>
          <StatusSep />
          <PlainButton aria-label="适合页面"><Icon name="fit" size={14} /></PlainButton>
          <ZoomPick>
            <select aria-label="缩放比例" defaultValue="80%">
              <option>80%</option>
              <option>100%</option>
            </select>
            <Caret />
          </ZoomPick>
          <PlainButton aria-label="缩小"><Icon name="minus" /></PlainButton>
          <Range
            type="range"
            aria-label="缩放"
            value={zoom}
            onChange={(e) => setZoom(e.target.value)}
          />
          <PlainButton aria-label="放大"><Icon name="plus" size={12} /></PlainButton>
          <PlainButton aria-label="全屏"><Icon name="full" /></PlainButton>
        </StatusRight>
      </StatusBar>
      <DesktopEdge />

      <SiteMark>
        <Svg width="44" height="40" viewBox="0 0 44 40" aria-hidden="true">
          <path fill="#4aa3e0" stroke="none" d="M42 1C20 0 2 12 1 26c0 4 2 7 4 8C4 22 16 8 42 1z" />
          <path fill="#2f7cc4" stroke="none" d="M4 30c4-14 24-20 22-9-1 5-8 8-12 7 5-2 9-5 8-8C20 15 8 22 9 36c-2-1-4-3-5-6z" />
          <path fill="#52b96a" stroke="none" d="M26 15c10-3 18 2 15 9-3 8-15 14-26 13 10-3 20-9 20-15 0-4-4-6-9-7z" />
          <path fill="#d9cf3c" stroke="none" d="M4 39c10 0 20-3 26-9-3 6-12 11-26 9z" />
        </Svg>
        <div>
          <b>极光下载站</b>
          <em>www.xz7.com</em>
        </div>
      </SiteMark>
      <Arrows aria-hidden="true">
        {ARROWS.map((a) => (
          <path key={a.join()} d={arrowPath(a)} />
        ))}
      </Arrows>
    </Shell>
  );
};
export default App;

/* ---------- styles ---------- */
const GlobalStyle = createGlobalStyle`
  * {
    box-sizing: border-box;
  }
  body {
    margin: 0;
    font-family: "Noto Sans", "Noto Sans CJK SC", sans-serif;
    font-size: 12px;
    line-height: 18px;
    color: #2b3347;
    background: #f5f7fa;
  }
  button, input, select {
    font: inherit;
    color: inherit;
    border: 0;
    padding: 0;
    background: none;
    white-space: nowrap;
  }
  p, h2 {
    margin: 0;
  }
`;

const Shell = styled.div`
  position: relative;
  display: flex;
  flex-direction: column;
  min-height: 100vh;
  overflow: hidden;
`;

const PlainButton = styled.button`
  display: flex;
  align-items: center;
  gap: 4px;
`;
const Faint = styled.span`
  color: #a9afbf;
`;

const TitleBar = styled.header`
  display: flex;
  align-items: flex-end;
  height: 40px;
  background: #e2e3e7;
`;
const HomeTab = styled.button`
  width: 68px;
  height: 30px;
  color: #fff;
  background: #618efe;
`;
const TemplateTab = styled.button`
  display: flex;
  align-items: center;
  gap: 4px;
  width: 125px;
  height: 30px;
  margin: 0 3px;
  padding-left: 10px;
  color: #474d5c;
  background: #d7d8db;
`;
const FileTab = styled.button`
  display: flex;
  align-items: center;
  gap: 4px;
  width: 250px;
  height: 30px;
  padding: 0 13px 0 10px;
  background: #fff;
  border-radius: 2px 2px 0 0;
  color: #16191f;
  span:nth-of-type(2) {
    margin-left: auto;
  }
`;
const Dot = styled.i`
  width: 6px;
  height: 6px;
  margin-left: 8px;
  border-radius: 50%;
  background: #e3980c;
`;
const AddTab = styled.button`
  height: 30px;
  padding: 0 11px;
`;
const WindowTools = styled.div`
  display: flex;
  align-items: center;
  gap: 13px;
  height: 40px;
  margin-left: auto;
  color: #4c5876;
`;
const LoginPill = styled.button`
  display: flex;
  align-items: center;
  justify-content: space-between;
  width: 80px;
  height: 24px;
  padding: 0 2px 0 6px;
  border-radius: 12px;
  color: #fff;
  background: #f4a70d;
`;
const WinSep = styled.i`
  width: 1px;
  height: 20px;
  margin: 0 -4px;
  background: #c5c8cf;
`;
const WinButton = styled.button`
  color: #7f89a3;
`;

const MenuBar = styled.nav`
  display: flex;
  align-items: center;
  height: 38px;
  padding: 1px 8px 0 12px;
  background: #fff;
`;
const FileButton = styled(PlainButton)`
  gap: 5px;
  margin-right: 10px;
`;
const BarSep = styled.i`
  width: 1px;
  height: 20px;
  background: #dcdee3;
`;
const QuickTools = styled.div`
  display: flex;
  align-items: center;
  gap: 9px;
  padding: 0 5px 0 9px;
  width: 189px;
`;
const QuickCaret = styled.span`
  margin: 0 0 0 -5px;
`;
const Tabs = styled.div`
  display: flex;
  align-items: center;
  padding: 0 4px 0 3px;
`;
const MenuTab = styled.button`
  height: 20px;
  padding: ${(p) => (p.$wide ? "0 15px" : "0 10px")};
  margin: ${(p) => (p.$wide ? "0" : "0 3px")};
  border-radius: 10px;
  color: ${(p) => (p.$active ? "#fff" : "inherit")};
  font-weight: ${(p) => (p.$active ? 700 : 400)};
  background: ${(p) => (p.$active ? "#4a90f4" : "transparent")};
`;
const ToolTab = styled.button`
  margin: 0 30px 0 22px;
  color: #4289f0;
`;
const SearchBox = styled.label`
  display: flex;
  align-items: center;
  gap: 2px;
  color: #8790a8;
  input {
    width: 120px;
    outline: none;
    &::placeholder {
      color: #7b8499;
      opacity: 1;
    }
  }
`;
const MenuRight = styled.div`
  display: flex;
  align-items: center;
  gap: 12px;
  margin-left: auto;
`;
const ShareButton = styled(PlainButton)`
  gap: 6px;
  width: 60px;
  height: 24px;
  padding-left: 9px;
  border-radius: 3px;
  color: #fff;
  background: #4a90f4;
`;

const RibbonBar = styled.div`
  position: relative;
  z-index: 5;
  display: flex;
  gap: 13px;
  height: 64px;
  padding: 0 9px;
  background: #fff;
  box-shadow: 0 1px 4px rgba(60, 80, 130, 0.25);
`;
const RibbonSep = styled.i`
  width: 1px;
  height: 62px;
  margin: 0 -2px;
  background: #ececef;
`;
const RibbonGroup = styled.div`
  display: flex;
  gap: 13px;
  ${RibbonSep} {
    margin: ${(p) => (p.$snug ? "0 -3px" : "0 -2px")};
  }
`;
const Tool = styled.button`
  display: flex;
  flex-direction: column;
  align-items: center;
  gap: 4px;
  height: 50px;
  margin: ${(p) => (p.$open ? "2px -6px 0" : "2px 0 0")};
  padding: ${(p) => (p.$open ? "3px 6px 0" : "3px 0 0")};
  color: ${(p) => (p.$muted ? "#a9acb3" : "inherit")};
  background: ${(p) => (p.$open ? "#dce1e7" : "none")};
`;
const Label = styled.span`
  display: flex;
  align-items: center;
  gap: 2px;
`;
const SmallColumn = styled.div`
  display: flex;
  flex-direction: column;
  gap: 3px;
  margin: 3px -2px 0;
`;
const SmallTool = styled.button`
  display: flex;
  align-items: center;
  gap: 4px;
  height: 24px;
  color: ${(p) => (p.$muted ? "#a9acb3" : "inherit")};
`;

const MenuAnchor = styled.div`
  position: relative;
`;
const Menu = styled.div`
  position: absolute;
  top: 53px;
  left: -5px;
  width: 504px;
  border: 1px solid #cfd1d5;
  background: #fff;
  box-shadow: 0 1px 5px rgba(0, 0, 0, 0.35);
`;
const MenuTitle = styled.div`
  height: 26px;
  padding: 4px 11px;
  font-weight: 700;
  color: #444b5c;
  background: #f3f4f6;
`;
const ShapeScroll = styled.div`
  position: relative;
  padding: 6px 10px 0 4px;
  color: #6a8fd9;
  section:last-of-type > div {
    margin-bottom: 2px;
  }
`;
const SectionTitle = styled.h3`
  display: flex;
  align-items: center;
  gap: 8px;
  margin: 0 0 6px;
  padding-left: 6px;
  font-size: 12px;
  font-weight: 400;
  line-height: 18px;
  color: #4a5161;
  &::after {
    content: "";
    flex: 1;
    height: 1px;
    background: #d5d7da;
  }
`;
const ShapeGrid = styled.div`
  display: grid;
  grid-template-columns: repeat(20, 24px);
  margin-bottom: 11px;
`;
const ShapeButton = styled.button`
  display: flex;
  align-items: center;
  justify-content: center;
  width: 20px;
  height: 20px;
  margin: 2px;
  background: ${(p) => (p.$active ? "#e3e7ed" : "none")};
`;
const MenuScrollbar = styled.i`
  position: absolute;
  top: 2px;
  right: 2px;
  bottom: 6px;
  width: 7px;
  border-radius: 4px;
  background: #e4e5e8;
`;
const Cursor = styled.svg`
  position: absolute;
  z-index: 2;
  top: 49px;
  left: 18px;
`;
const Tip = styled.span`
  position: absolute;
  top: 65px;
  left: 20px;
  padding: 3px 8px;
  border: 1px solid #9c9c9c;
  color: #575757;
  background: #fff;
  box-shadow: 2px 2px 2px rgba(0, 0, 0, 0.4);
`;
const SmartHead = styled.div`
  display: flex;
  align-items: center;
  gap: 6px;
  height: 26px;
  padding: 0 13px 0 12px;
  color: #2b3347;
  background: #f3f4f6;
  span {
    margin-right: auto;
  }
  button:last-child {
    margin-left: 9px;
  }
`;
const Thumbs = styled.div`
  display: grid;
  grid-template-columns: repeat(4, 1fr);
  gap: 8px;
  padding: 12px 13px 20px;
`;
const Thumb = styled.button`
  height: 64px;
  border: 1px solid #e6e7ea;
  border-radius: 5px;
  overflow: hidden;
`;
const MenuFoot = styled.div`
  padding: 2px 0 0 9px;
  border-top: 1px solid #ececef;
`;
const FootButton = styled.button`
  display: flex;
  align-items: center;
  gap: 8px;
  width: 100%;
  height: 31px;
`;

const Work = styled.div`
  display: flex;
  flex: 1;
`;
const MainColumn = styled.div`
  display: flex;
  flex-direction: column;
  flex: 1;
  min-width: 0;
`;
const Banner = styled.div`
  position: relative;
  display: flex;
  align-items: center;
  justify-content: center;
  gap: 15px;
  height: 40px;
  padding-left: 90px;
  color: #454b59;
  background: #ebf1fe;
`;
const BannerButton = styled.button`
  width: 67px;
  height: 24px;
  border-radius: 3px;
  color: #fff;
  background: #417ff9;
`;
const BannerClose = styled.button`
  position: absolute;
  right: 7px;
  color: #666;
`;
const Panes = styled.div`
  display: flex;
  flex: 1;
`;
const NavRail = styled.div`
  width: 40px;
  padding: 2px;
  border-right: 1px solid #dfe2ea;
`;
const RailButton = styled.button`
  display: flex;
  align-items: center;
  justify-content: center;
  width: 32px;
  height: 32px;
  margin-bottom: 4px;
  border-radius: 2px;
  background: ${(p) => (p.$active ? "#d9dee5" : "none")};
`;
const OutlinePane = styled.aside`
  display: flex;
  flex-direction: column;
  width: 274px;
  padding: 0 6px 1px 3px;
  border-right: 1px solid #dfe2ea;
  h2 {
    padding-left: 10px;
    font-size: 19px;
    font-weight: 400;
    line-height: 30px;
  }
`;
const OutlineTools = styled.div`
  display: flex;
  align-items: center;
  gap: 8px;
  height: 24px;
  margin-bottom: 6px;
  padding-left: 4px;
  color: #777;
`;
const SmartButton = styled(PlainButton)`
  margin-left: 70px;
  color: #2b3347;
`;
const Tree = styled.ul`
  flex: 1;
  margin: 0;
  padding: 6px 0 0;
  border: 1px solid #dfe2ea;
  border-radius: 3px;
  list-style: none;
  font-family: Roboto, "Noto Sans CJK SC", sans-serif;
  white-space: pre;
`;
const TreeRow = styled.li`
  display: flex;
  align-items: center;
  gap: 3px;
  height: 22px;
  margin-left: ${(p) => (p.$level === 2 ? 39 : 10 + p.$level * 16)}px;
  padding-left: ${(p) => (p.$level === 2 ? 20 : 0)}px;
  background: ${(p) => (p.$active ? "#d8dde4" : "none")};
  outline: ${(p) => (p.$active ? "1px solid #ccd2da" : "none")};
`;
const SideRuler = styled.div`
  display: flex;
  flex-direction: column;
  width: 19px;
  padding-left: 3px;
  color: #57607a;
  font-size: 11px;
`;
const RulerFill = styled.div`
  display: flex;
  flex: 1;
  flex-direction: column;
  justify-content: flex-end;
  gap: 16px;
  padding-bottom: 3px;
  border-bottom: 1px solid #8a97b0;
  background: #e9edf3;
`;
const RulerTail = styled.div`
  height: 39px;
  padding-top: 12px;
`;
/* turned by 180deg, so left/bottom here is right/top on screen */
const SideMark = styled.span`
  display: block;
  width: 16px;
  height: 18px;
  line-height: 16px;
  text-align: center;
  writing-mode: vertical-rl;
  rotate: 180deg;
  background: linear-gradient(#8a97b0, #8a97b0) left bottom / 10px 1px no-repeat,
    linear-gradient(#8a97b0, #8a97b0) left top / ${(p) => (p.$both ? "10px" : "0")} 1px no-repeat;
`;

const DocArea = styled.main`
  display: flex;
  flex: 1;
  flex-direction: column;
  min-width: 0;
`;
const RulerRow = styled.div`
  display: flex;
  justify-content: center;
  height: 25px;
  padding-left: 8px;
`;
const Ruler = styled.div`
  position: relative;
  display: grid;
  grid-template-columns: repeat(20, 1fr);
  width: 635px;
  height: 16px;
  padding: 0 15px 0 106px;
  font-family: "Noto Sans", sans-serif;
  font-size: 10px;
  line-height: 15px;
  text-align: center;
  color: #4b546b;
  background: linear-gradient(90deg, #e9edf1 538px, transparent 538px);
`;
const IndentMarks = styled.svg`
  position: absolute;
  inset: 0 auto auto 0;
  fill: none;
  stroke: #4b546b;
`;
const Canvas = styled.div`
  display: flex;
  flex: 1;
  justify-content: center;
  padding-left: 8px;
`;
const Page = styled.article`
  position: relative;
  width: 635px;
  padding: 16px 100px 0 93px;
  background: #fff;
  &::before,
  &::after {
    content: "";
    position: absolute;
    top: 0;
    bottom: 0;
    width: 16px;
  }
  &::before {
    right: 100%;
    background: linear-gradient(270deg, #dfe1e3, #f5f7fa);
  }
  &::after {
    left: 100%;
    background: linear-gradient(90deg, #dfe1e3, #f5f7fa);
  }
`;
const DocBody = styled.div`
  font-family: "Liberation Serif", "Noto Sans CJK SC", serif;
  font-size: 13px;
  line-height: 25px;
  color: #000;
`;
const Line = styled.span`
  display: block;
  height: 25px;
  padding-left: ${(p) => (p.$indent ? 26 : 0)}px;
  white-space: nowrap;
  text-align: justify;
  text-align-last: ${(p) => (p.$last ? "left" : "justify")};
  font-feature-settings: ${(p) => (p.$tight ? '"halt"' : "normal")};
`;
const Hot = styled.span`
  color: #f00;
`;
const Typo = styled.span`
  text-decoration: underline wavy #f00 1px;
  text-underline-offset: 2px;
`;
const Corner = styled.i`
  position: absolute;
  width: 20px;
  height: 20px;
  border: 0 solid #c3c3c3;
  ${(p) => (p.$top ? "top: 2px; border-bottom-width: 1px;" : "bottom: 18px; border-top-width: 1px;")}
  ${(p) => (p.$right ? "left: 539px; border-left-width: 1px;" : "left: 78px; border-right-width: 1px;")}
`;
const PageNumber = styled.span`
  position: absolute;
  right: 0;
  bottom: 10px;
  left: 0;
  text-align: center;
  font-family: "Liberation Serif", serif;
  color: #666;
`;
const DrawnLine = styled.svg`
  position: absolute;
  top: 462px;
  left: 110px;
  fill: none;
`;
const FloatTools = styled.div`
  position: absolute;
  top: 471px;
  right: 38px;
  display: flex;
  flex-direction: column;
  align-items: center;
  gap: 11px;
`;
const RoundButton = styled.button`
  display: flex;
  align-items: center;
  justify-content: center;
  width: 18px;
  height: 18px;
  margin-bottom: -3px;
  border: 1px solid #bbb;
  border-radius: 50%;
  color: #888;
`;
const FloatButton = styled.button`
  display: flex;
  align-items: center;
  justify-content: center;
  width: 28px;
  height: 28px;
  border: 1px solid #d9dbe0;
  background: #fff;
  box-shadow: 1px 2px 4px rgba(0, 0, 0, 0.25);
`;
const SideCards = styled.div`
  position: absolute;
  z-index: 1;
  top: 20px;
  left: calc(100% + 19px);
`;
const EjectButton = styled.button`
  display: flex;
  align-items: center;
  justify-content: center;
  width: 24px;
  height: 24px;
  margin-bottom: 9px;
  border-radius: 3px;
  background: #f6f6f6;
  box-shadow: 0 0 4px rgba(0, 0, 0, 0.2);
`;
const CheckCard = styled.button`
  display: flex;
  align-items: center;
  gap: 6px;
  width: 100px;
  height: 32px;
  border-radius: 3px;
  overflow: hidden;
  color: #000;
  background: #fff;
  box-shadow: 0 1px 5px rgba(0, 0, 0, 0.2);
  i {
    display: flex;
    align-items: center;
    justify-content: center;
    width: 31px;
    height: 32px;
    color: #fff;
    background: #8a89fc;
  }
`;
const ScrollColumn = styled.div`
  display: flex;
  flex-direction: column;
  width: 14px;
`;
const RulerToggle = styled.div`
  height: 18px;
  padding: 4px 1px;
`;
const ScrollTrack = styled.div`
  display: flex;
  flex: 1;
  flex-direction: column;
  align-items: center;
  justify-content: space-between;
  padding: 8px 0 0;
  background: #e8e9ef;
`;
const Thumbbar = styled.i`
  width: 12px;
  height: 46px;
  margin: auto 0 70px;
  border-radius: 6px;
  background: #d2d4dc;
`;
const RightRail = styled.aside`
  display: flex;
  flex-direction: column;
  align-items: center;
  gap: 20px;
  width: 39px;
  padding-top: 11px;
  border-left: 2px solid #e2e5ee;
  padding-left: 4px;
  background: #f5f7fa;
`;
const Grip = styled.i`
  width: 20px;
  height: 4px;
  border: solid #c9ccd3;
  border-width: 1px 0;
`;
const RailFoot = styled.div`
  display: flex;
  justify-content: center;
  width: 100%;
  height: 43px;
  margin-top: auto;
  padding-top: 7px;
  border-top: 1px solid #dfe2ea;
`;

const StatusBar = styled.footer`
  display: flex;
  align-items: center;
  gap: 2px;
  height: 29px;
  padding: 0 9px 0 0;
  border-top: 1px solid #dfe2ea;
  background: #f5f7fa;
`;
const StatusText = styled.span`
  padding-left: 6px;
`;
const StatusSep = styled.i`
  width: 1px;
  height: 14px;
  margin: 0 3px;
  background: #dcdfe6;
`;
const StatusButton = styled(PlainButton)`
  height: 24px;
  gap: 3px;
  margin-left: ${(p) => (p.$apart ? 12 : p.$active ? 4 : 0)}px;
  padding: 0 2px;
  background: ${(p) => (p.$active ? "#e7f0fd" : "none")};
`;
const StatusRight = styled.div`
  display: flex;
  align-items: center;
  gap: 9px;
  margin-left: auto;
`;
const ViewButtons = styled.div`
  display: flex;
  gap: 3px;
`;
const ViewButton = styled.button`
  display: flex;
  align-items: center;
  justify-content: center;
  width: 23px;
  height: 24px;
  border-radius: 2px;
  background: ${(p) => (p.$active ? "#dae0e7" : "none")};
`;
const ZoomPick = styled.label`
  display: flex;
  align-items: center;
  gap: 4px;
  select {
    width: 26px;
    appearance: none;
    outline: none;
  }
`;
const Range = styled.input`
  width: 140px;
  height: 14px;
  margin: 0;
  appearance: none;
  outline: none;
  background: linear-gradient(90deg, #3a4864 38%, #d3d7e0 38%) center / 100% 1px no-repeat;
  &::-webkit-slider-thumb {
    appearance: none;
    width: 12px;
    height: 12px;
    border: 1px solid #3a4864;
    border-radius: 50%;
    background: #f5f7fa;
  }
`;
const DesktopEdge = styled.div`
  height: 4px;
  background: linear-gradient(90deg, #241f1d, #43362f 34%, #5f524e 35%, #5f524e 44%, #2b2321 45%, #3a2d28);
`;

const SiteMark = styled.div`
  position: absolute;
  right: 0;
  bottom: 7px;
  display: flex;
  align-items: center;
  opacity: 0.8;
  b {
    display: block;
    font-size: 21px;
    line-height: 22px;
    color: #3f83cb;
  }
  em {
    display: block;
    font-family: "Liberation Sans", sans-serif;
    font-size: 18px;
    font-style: normal;
    font-weight: 700;
    line-height: 20px;
    color: #4dba5c;
  }
`;
const Arrows = styled.svg`
  position: absolute;
  z-index: 9;
  inset: 0;
  width: 100%;
  height: 100%;
  pointer-events: none;
  fill: #f60000;
  stroke: #8c0d0d;
  stroke-width: 0.5;
  filter: drop-shadow(2px 3px 2px rgba(0, 0, 0, 0.5));
`;
